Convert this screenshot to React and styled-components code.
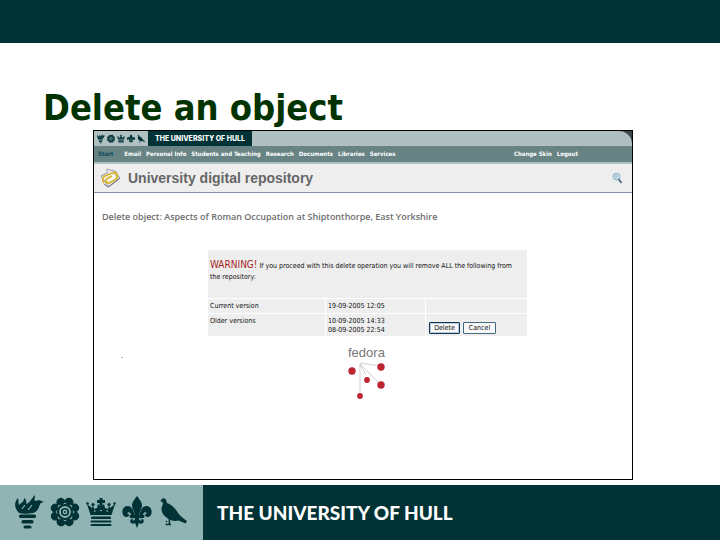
import React from 'react';
import styled, { createGlobalStyle } from 'styled-components';

const humanist = '"DejaVu Sans Condensed", "DejaVu Sans", Verdana, sans-serif';
const dark = '#003236';
const sage = '#90b3b3';

const GlobalStyle = createGlobalStyle`
  * { box-sizing: border-box; }
  body { margin: 0; background: #fff; font-family: ${humanist}; }
`;

const Slide = styled.div`
  display: flex;
  flex-direction: column;
  min-height: 100vh;
`;

const TopBar = styled.header`
  height: 43px;
  background: ${dark};
`;

const SlideBody = styled.main`
  flex: 1;
  padding: 43px 87px 5px 93px;
`;

const Title = styled.h1`
  margin: 0 0 0 -50px;
  font: bold 36px/44px ${humanist};
  color: #003300;
  white-space: nowrap;
`;

const Window = styled.section`
  min-height: 350px;
  border: 1px solid #000;
  background: #fff;
`;

const Banner = styled.div`
  display: flex;
  height: 15px;
  background: #3c4649;
`;

const BannerMarks = styled.div`
  display: flex;
  align-items: center;
  width: 54px;
  padding-left: 2px;
  background: #b0c0c0;
`;

const BannerName = styled.div`
  width: 104px;
  background: ${dark};
  color: #fff;
  font: 800 7px/15px Inter, sans-serif;
  text-align: center;
  white-space: nowrap;
`;

const BannerFill = styled.div`
  flex: 1;
  background: #b0c0c0;
  border-top-right-radius: 13px;
`;

const Nav = styled.nav`
  display: flex;
  gap: 5px;
  height: 18px;
  padding: 0 54px 0 4px;
  border-bottom: 2px solid #b0c0c0;
  background: #678384;
`;

const NavLink = styled.a`
  font: bold 6px/16px ${humanist};
  color: ${(p) => (p.$current ? '#0b4a5c' : '#fff')};
  margin-right: ${(p) => (p.$current ? '6px' : '0')};
  margin-left: ${(p) => (p.$push ? 'auto' : '0')};
  text-decoration: none;
  white-space: nowrap;
`;

const AppHeader = styled.header`
  display: flex;
  align-items: center;
  gap: 7px;
  height: 29px;
  padding: 0 9px 0 6px;
  border-bottom: 1px solid #8890b4;
  background: #eee;
`;

const AppName = styled.h2`
  flex: 1;
  margin: 0;
  font: bold 14px/28px "Liberation Sans", Arial, sans-serif;
  color: #666;
`;

const SearchButton = styled.button`
  display: flex;
  padding: 0;
  border: 0;
  background: none;
`;

const PageHeading = styled.h3`
  margin: 18px 0 0 8px;
  font: 600 9px/12px "Open Sans", sans-serif;
  color: #6e6e6e;
  white-space: nowrap;
`;

const Versions = styled.table`
  width: 321px;
  margin: 26px 0 0 113px;
  border-collapse: separate;
  border-spacing: 1px;
  table-layout: fixed;
  font-size: 7px;
  line-height: 9px;
  color: #111;
`;

const Cell = styled.td`
  height: ${(p) => p.$height};
  padding: 3px 2px 1px;
  background: #eee;
  vertical-align: top;
  text-align: left;
  font-weight: normal;
`;

const WarningText = styled.p`
  margin: 0;
  padding: 6px 8px 0 0;
  line-height: 11px;
`;

const Warning = styled.strong`
  font-size: 10px;
  font-weight: normal;
  color: #a41c1c;
`;

const Actions = styled.div`
  display: flex;
  gap: 3px;
  padding: 5px 0 0 1px;
`;

const Button = styled.button`
  height: 12px;
  width: ${(p) => p.$width};
  padding: 0;
  border: 1px solid ${(p) => (p.$primary ? '#12354f' : '#44687c')};
  border-radius: 1px;
  background: #f7f8f8;
  box-shadow: ${(p) => (p.$primary ? 'inset 0 0 0 1px #b9cbe0' : 'none')};
  color: #111;
  font: 7px/9px ${humanist};
`;

const Credit = styled.div`
  display: flex;
  gap: 131px;
  padding: 9px 0 0 27px;
  font-size: 7px;
  line-height: 21px;
`;

const Fedora = styled.figure`
  width: 230px;
  margin: 0;
`;

const FedoraName = styled.figcaption`
  margin-left: 94px;
  font: 13px/14px "Liberation Sans", Arial, sans-serif;
  color: #777;
`;

const FedoraArt = styled.svg`
  display: block;
  margin-left: 92px;
`;

const Footer = styled.footer`
  display: flex;
  height: 55px;
`;

const FooterMarks = styled.div`
  display: flex;
  align-items: center;
  width: 203px;
  padding-left: 11px;
  background: ${sage};
`;

const FooterName = styled.div`
  flex: 1;
  padding-left: 14px;
  background: ${dark};
  color: #fff;
  font: 900 19px/55px Lato, sans-serif;
  white-space: nowrap;
`;

const petals = [0, 45, 90, 135, 180, 225, 270, 315];

const Torch = () => (
  <g>
    <path d="M5 19C0 14 0 8 4 4c1 3 0 5 1 7 3-3 5-3 5-7 2 1 3 4 2 6 4-1 5-5 9-9 0 3-1 4 0 6 3-1 5-1 9 1-4 0-4 3-5 5-1 3-3 5-6 6-6 1-9 1-14 0z" />
    <path d="M8 15l3-4M14 16l4-5" stroke="#90b3b3" strokeWidth="1.200" fill="none" />
    <rect x="5" y="20.500" width="17" height="3.500" rx="1.500" />
    <rect x="7.500" y="26" width="12" height="3.500" rx="1.500" />
    <rect x="9.500" y="31.500" width="8" height="3" rx="1.500" />
  </g>
);

const Rose = () => (
  <g>
    {petals.map((a) => <circle key={a} cx="15" cy="7.500" r="4.500" transform={`rotate(${a + 22} 15 18)`} />)}
    <circle cx="15" cy="18" r="10" />
    <g fill="none" stroke="#90b3b3">
      {petals.map((a) => <path key={a} d="M13.500 10q1.500-2 3 0" transform={`rotate(${a} 15 18)`} strokeWidth="1" />)}
      <circle cx="15" cy="18" r="5" strokeWidth="1.800" />
      <circle cx="15" cy="18" r="1.700" strokeWidth="1.400" />
    </g>
  </g>
);

const Crown = () => (
  <g>
    <path d="M4.500 21L1 10l5 4 1-3 1 4 3-1 1-4 3 3 3-3 1 4 3 1 1-4 1 3 5-4-3.500 11z" />
    <circle cx="1.500" cy="9.500" r="1.300" /><circle cx="7" cy="10.500" r="1.600" /><circle cx="23" cy="10.500" r="1.600" /><circle cx="28.500" cy="9.500" r="1.300" />
    <path d="M13.500 4h3v2h2.500v3h-2.500v4h-3V9H11V6h2.500z" />
    <path d="M8 17.500l1.500-1M14 16.500h2M20.500 16.500l1.500 1" stroke="#90b3b3" strokeWidth="1.200" fill="none" />
    <rect x="5" y="22.500" width="20" height="2.500" rx="1" />
    <rect x="4.500" y="26.500" width="21" height="2" rx="1" />
    <rect x="4.500" y="30" width="21" height="2" rx="1" />
  </g>
);

const Fleur = () => (
  <g>
    <path d="M15 2c3 4 5.500 7 5 10-.5 3-2.500 5-2.500 9h-5c0-4-2-6-2.500-9C9.500 9 12 6 15 2z" />
    <path d="M12.500 24c0-8-3-12-7-12S-.5 16 .7 20c.8 3 4 4 6 2C7.500 21 6.500 19 5 19.500 6.500 17 9 19 9 21c0 1-.5 2-1 3zM17.500 24c0-8 3-12 7-12s6 4 4.800 8c-.8 3-4 4-6 2-.8-1 .2-3 1.700-2.500C23.500 17 21 19 21 21c0 1 .5 2 1 3z" />
    <rect x="7.500" y="21" width="15" height="2.800" rx="1" />
    <path d="M13 23h4c0 3 1 4 2 3.500s0-2 0-2c3 0 4 4 1 5-2 .6-3-.5-3-.5L15 34l-2-5s-1 1.100-3 .5c-3-1-2-5 1-5 0 0-1 1.500 0 2s2-.5 2-3.500z" />
  </g>
);

const Bird = () => (
  <g>
    <path d="M2.500 7.500C3 5 5 3.500 6.500 4.500c2 .8 2 3 2.500 4.500 5 2 8 5 11 10 2 3 5 5 9 8l-1.500 2.500-7-3c-4 1-9 0-12-3-4-3-6-7-4.500-11C5 10.500 5 9 4.500 8z" />
    <path d="M11 23c1 3 0 5 .5 7M7.500 30.500h5.500M9 27l-1 1" fill="none" stroke="currentColor" strokeWidth="1.500" />
  </g>
);

const marks = [Torch, Rose, Crown, Fleur, Bird];

const MarkSvg = styled.svg`
  flex: none;
  color: ${dark};
  fill: ${dark};
`;

const Marks = ({ width, height }) =>
  marks.map((Mark, i) => (
    <MarkSvg key={i} width={width} height={height} viewBox="-3 0 36 38" aria-hidden="true">
      <Mark />
    </MarkSvg>
  ));

const RepositoryIcon = () => (
  <svg width="21" height="21" viewBox="0 0 21 21" aria-hidden="true">
    <path d="M1 8L13 2l7 8-11 9z" fill="#f4f4f2" stroke="#8a8d9a" strokeWidth="1" />
    <path d="M7 5V1l10 3-1 4" fill="#e8e9ef" stroke="#a5a7b5" />
    <path d="M4 15q-3-5 1-7l7-3q4-1 5 2t-2 5l-6 3q-3 0-3-2t2-3l4-2" fill="none" stroke="#d9b62d" strokeWidth="1.800" />
    <path d="M4 16l4 3 12-9" fill="none" stroke="#72747f" />
  </svg>
);

const SearchIcon = () => (
  <svg width="11" height="12" viewBox="0 0 11 12" aria-hidden="true">
    <circle cx="4.500" cy="4.500" r="3.500" fill="#cfe3f2" stroke="#8fb1cc" />
    <path d="M2 4h4M4 2v5" stroke="#8fb9cf" />
    <path d="M6.500 7l3 4" stroke="#4d6c8c" strokeWidth="1.800" />
  </svg>
);

const links = ['Email', 'Personal Info', 'Students and Teaching', 'Research', 'Documents', 'Libraries', 'Services'];

export default function App() {
  return (
    <Slide>
      <GlobalStyle />
      <TopBar />
      <SlideBody>
        <Title>Delete an object</Title>
        <Window>
          <Banner>
            <BannerMarks><Marks width={10} height={12} /></BannerMarks>
            <BannerName>THE UNIVERSITY OF HULL</BannerName>
            <BannerFill />
          </Banner>
          <Nav>
            <NavLink href="#start" $current>Start</NavLink>
            {links.map((l) => <NavLink key={l} href="#section">{l}</NavLink>)}
            <NavLink href="#skin" $push>Change Skin</NavLink>
            <NavLink href="#logout">Logout</NavLink>
          </Nav>
          <AppHeader>
            <RepositoryIcon />
            <AppName>University digital repository</AppName>
            <SearchButton type="button" aria-label="Search"><SearchIcon /></SearchButton>
          </AppHeader>
          <PageHeading>Delete object: Aspects of Roman Occupation at Shiptonthorpe, East Yorkshire</PageHeading>
          <Versions>
            <colgroup><col width="117" /><col width="99" /><col /></colgroup>
            <tbody>
              <tr>
                <Cell colSpan={3} $height="48px">
                  <WarningText>
                    <Warning>WARNING!</Warning> If you proceed with this delete operation you will remove ALL the following from the repository:
                  </WarningText>
                </Cell>
              </tr>
              <tr>
                <Cell as="th" scope="row" $height="14px">Current version</Cell>
                <Cell>19-09-2005 12:05</Cell>
                <Cell />
              </tr>
              <tr>
                <Cell as="th" scope="row" $height="22px">Older versions</Cell>
                <Cell>10-09-2005 14:33<br />08-09-2005 22:54</Cell>
                <Cell>
                  <Actions>
                    <Button type="button" $width="31px" $primary>Delete</Button>
                    <Button type="button" $width="33px">Cancel</Button>
                  </Actions>
                </Cell>
              </tr>
            </tbody>
          </Versions>
          <Credit>
            <span>.</span>
            <Fedora>
              <FedoraName>fedora</FedoraName>
              <FedoraArt width="46" height="42" viewBox="0 0 46 42" aria-hidden="true">
                <path d="M14 3l20 3M14 4l6 11M14 4l20 20M14 4v30" stroke="#bbb" strokeWidth=".7" />
                <g fill="#bd2630">
                  <circle cx="6" cy="11" r="3.700" /><circle cx="35" cy="7" r="3.700" /><circle cx="21" cy="20" r="2.900" /><circle cx="35" cy="25" r="3.700" /><circle cx="14" cy="36" r="2.900" />
                </g>
              </FedoraArt>
            </Fedora>
          </Credit>
        </Window>
      </SlideBody>
      <Footer>
        <FooterMarks><Marks width={36} height={38} /></FooterMarks>
        <FooterName>THE UNIVERSITY OF HULL</FooterName>
      </Footer>
    </Slide>
  );
}
